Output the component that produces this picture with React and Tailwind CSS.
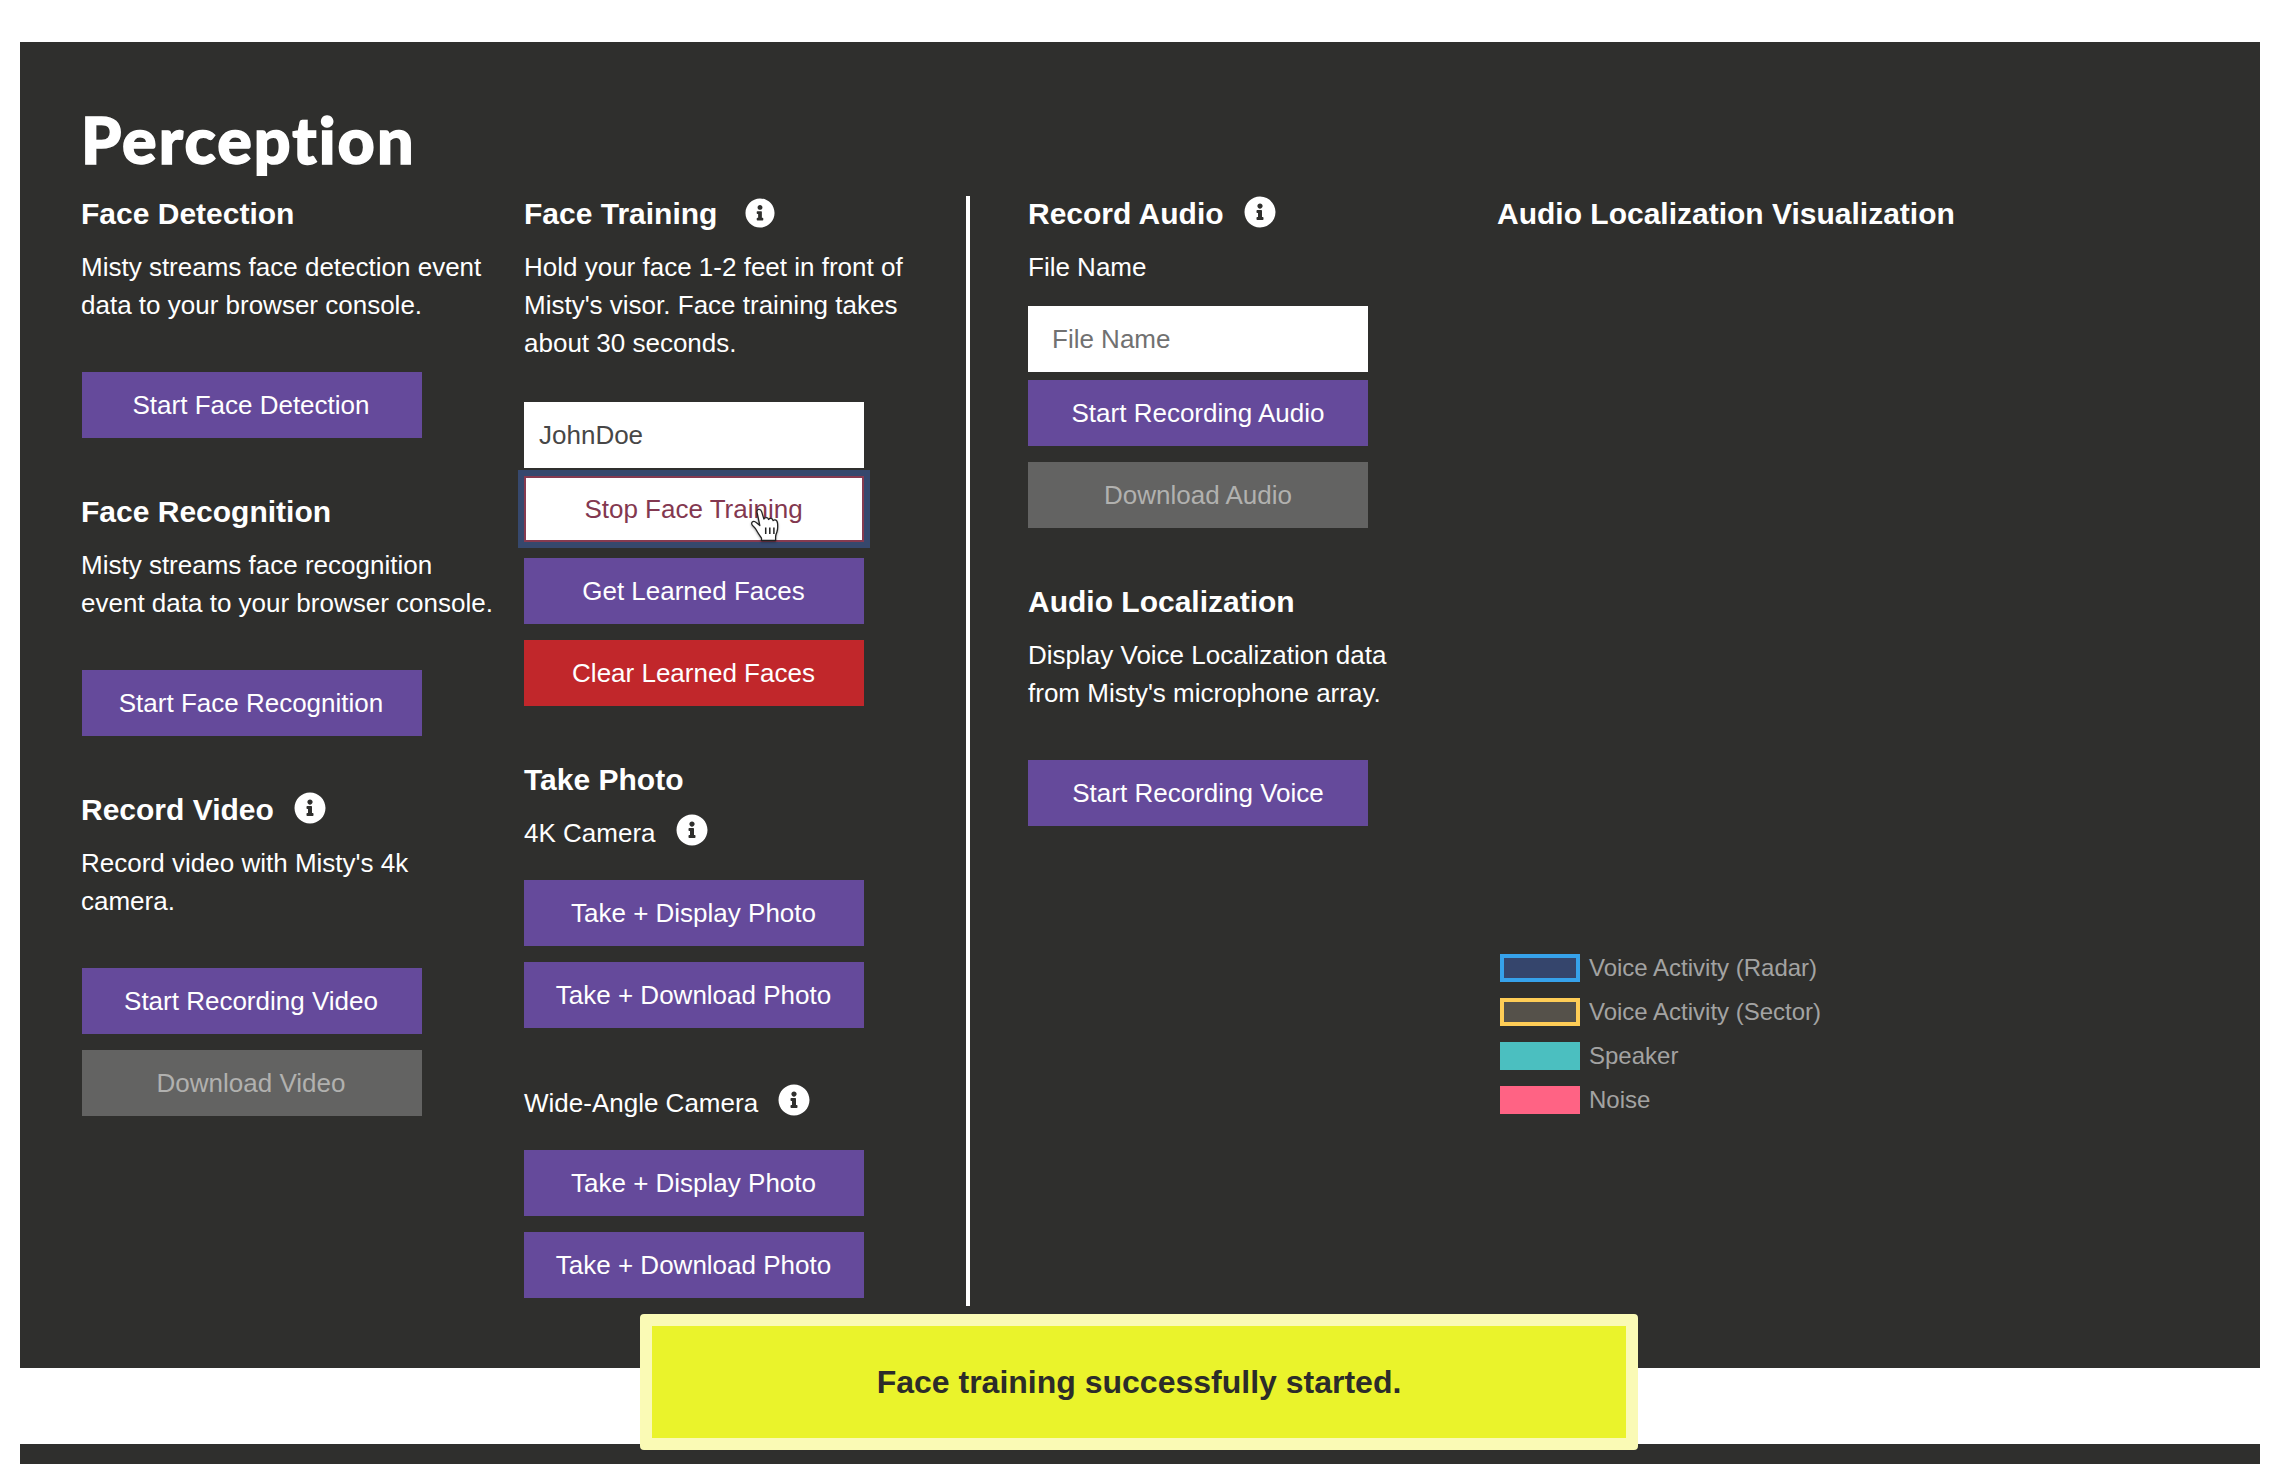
import React from "react";
import { FaInfoCircle } from "react-icons/fa";

const variants = {
  primary: "bg-[#654a9b] text-white",
  danger: "bg-[#c1272b] text-white",
  disabled: "bg-[#636362] text-[#b1b1af]",
  active: "bg-white text-[#833850] border-2 border-[#863a50] ring-6 ring-[#36486d]",
};

function Button({ children, variant = "primary", className = "" }) {
  return (
    <button
      className={`flex h-[66px] w-[340px] items-center justify-center text-[26px] leading-[38px] whitespace-nowrap ${variants[variant]} ${className}`}
      disabled={variant === "disabled"}
    >
      {children}
    </button>
  );
}

function Info({ className = "size-8" }) {
  return <FaInfoCircle className={`shrink-0 text-white ${className}`} />;
}

function Title({ children, icon }) {
  return (
    <div className="flex h-9 items-start">
      <h3 className="text-[30px] leading-9 font-bold whitespace-nowrap">{children}</h3>
      {icon}
    </div>
  );
}

function Lines({ lines }) {
  return (
    <div className="mt-4 text-[26px] leading-[38px] whitespace-nowrap">
      {lines.map((line) => (
        <p key={line}>{line}</p>
      ))}
    </div>
  );
}

function Label({ children, icon }) {
  return (
    <div className="flex h-[38px] items-start text-[26px] leading-[38px] whitespace-nowrap">
      {children}
      {icon}
    </div>
  );
}

function HandCursor() {
  return (
    <svg
      viewBox="0 0 32 34"
      className="absolute top-[32px] left-[226px] h-[34px] w-8 drop-shadow-[0_1px_1px_rgba(0,0,0,0.35)]"
    >
      <path
        d="M11.5 32.500v-2.500c-1.2-1.8-3.2-4.4-4.6-7-1.2-2.2-2.4-3.8-3.8-5-1.6-1.5-1.8-3-.9-3.9 1.2-1.1 3-.5 4.3.7l3.3 2.7L7.3 5.5C6.7 3.500 7 1.800 8.500 1.400c1.600-.4 2.700.8 3.200 2.500l2.200 7.200c.4-1 1.300-1.500 2.300-1.500 1.200 0 2 .7 2.400 1.900.6-.8 1.400-1.200 2.300-1.100 1.200.1 1.900 1 2.200 2.200.6-.6 1.400-.9 2.200-.7 1.600.4 2.200 2 2.300 3.900.2 3.200.4 5.600-.7 8.200-.8 1.800-1.300 3.300-1.300 5v3.500z"
        fill="#fff"
        stroke="#222"
        strokeWidth="1.300"
        strokeLinejoin="round"
      />
      <path d="M15.700 19.500v6.500M19.800 19.500v6.500M23.900 19.500v6.500" stroke="#222" strokeWidth="1.500" fill="none" />
    </svg>
  );
}

const legend = [
  { label: "Voice Activity (Radar)", swatch: "border-4 border-[#36a2eb] bg-[#35456c]" },
  { label: "Voice Activity (Sector)", swatch: "border-4 border-[#ffcd56] bg-[#55514a]" },
  { label: "Speaker", swatch: "bg-[#4bbfc0]" },
  { label: "Noise", swatch: "bg-[#ff6384]" },
];

export default function App() {
  return (
    <div
      className="relative flex h-[1464px] w-[2278px] flex-col overflow-hidden bg-white pt-[42px] pl-5 text-white"
      style={{ fontFamily: '"Liberation Sans", Arial, sans-serif' }}
    >
      <section className="h-[1326px] w-[2240px] shrink-0 bg-[#2f2f2d] pt-14 pl-[61px]">
        <h1 className="h-20 pt-px font-[Lato,sans-serif] text-[64.500px] leading-[80px] font-black tracking-[2.100px] [-webkit-text-stroke:1.500px_white] [font-variant-ligatures:none]">
          Perception
        </h1>

        <div className="mt-[18px] flex h-[1110px]">
          <div className="flex w-[443px] flex-col gap-14">
            <div>
              <Title>Face Detection</Title>
              <Lines lines={["Misty streams face detection event", "data to your browser console."]} />
              <Button className="mt-12 ml-px pr-[2px]">Start Face Detection</Button>
            </div>
            <div>
              <Title>Face Recognition</Title>
              <Lines lines={["Misty streams face recognition", "event data to your browser console."]} />
              <Button className="mt-12 ml-px pr-[2px]">Start Face Recognition</Button>
            </div>
            <div>
              <Title icon={<Info className="ml-5 size-8" />}>Record Video</Title>
              <Lines lines={["Record video with Misty's 4k", "camera."]} />
              <Button className="mt-12 ml-px pr-[2px]">Start Recording Video</Button>
              <Button variant="disabled" className="mt-4 ml-px pr-[2px]">Download Video</Button>
            </div>
          </div>

          <div className="flex w-[442px] flex-col gap-14">
            <div>
              <Title icon={<Info className="mt-0.5 ml-7 size-[30px]" />}>Face Training</Title>
              <Lines
                lines={[
                  "Hold your face 1-2 feet in front of",
                  "Misty's visor. Face training takes",
                  "about 30 seconds.",
                ]}
              />
              <input
                className="mt-10 block h-[66px] w-[340px] bg-white px-[15px] text-[26px] text-[#474747]"
                defaultValue="JohnDoe"
              />
              <div className="relative mt-2 w-[340px]">
                <Button variant="active" className="pr-px">Stop Face Training</Button>
                <HandCursor />
              </div>
              <Button className="mt-4 pr-px">Get Learned Faces</Button>
              <Button variant="danger" className="mt-4 pr-px">Clear Learned Faces</Button>
            </div>
            <div>
              <Title>Take Photo</Title>
              <div className="mt-4">
                <Label icon={<Info className="ml-5 size-8" />}>4K Camera</Label>
              </div>
              <Button className="mt-7 pr-px">Take + Display Photo</Button>
              <Button className="mt-4 pr-px">Take + Download Photo</Button>
            </div>
            <div>
              <Label icon={<Info className="ml-5 size-8" />}>Wide-Angle Camera</Label>
              <Button className="mt-7 pr-px">Take + Display Photo</Button>
              <Button className="mt-4 pr-px">Take + Download Photo</Button>
            </div>
          </div>

          <div className="mr-[58px] w-1 bg-white" />

          <div className="flex w-[469px] flex-col gap-14">
            <div>
              <Title icon={<Info className="ml-5 size-8" />}>Record Audio</Title>
              <Lines lines={["File Name"]} />
              <input
                className="mt-5 block h-[66px] w-[340px] bg-white px-6 text-[26px] placeholder:text-[#717171]"
                placeholder="File Name"
              />
              <Button className="mt-2">Start Recording Audio</Button>
              <Button variant="disabled" className="mt-4">Download Audio</Button>
            </div>
            <div>
              <Title>Audio Localization</Title>
              <Lines lines={["Display Voice Localization data", "from Misty's microphone array."]} />
              <Button className="mt-12">Start Recording Voice</Button>
            </div>
          </div>

          <div>
            <Title>Audio Localization Visualization</Title>
            <ul className="mt-[722px] ml-[3px] flex flex-col gap-4">
              {legend.map(({ label, swatch }) => (
                <li key={label} className="flex h-7 items-center gap-[9px] text-[24px] leading-7 text-[#a3a3a2]">
                  <span className={`h-7 w-20 ${swatch}`} />
                  {label}
                </li>
              ))}
            </ul>
          </div>
        </div>
      </section>

      <section className="mt-[76px] h-5 w-[2240px] shrink-0 bg-[#2f2f2d]" />

      <div className="absolute top-[1314px] left-[640px] flex h-[136px] w-[998px] items-center justify-center rounded border-12 border-[#fafab5] bg-[#eaf32b] text-[32px] leading-9 font-bold whitespace-nowrap text-[#2c2c2a]">
        Face training successfully started.
      </div>
    </div>
  );
}
